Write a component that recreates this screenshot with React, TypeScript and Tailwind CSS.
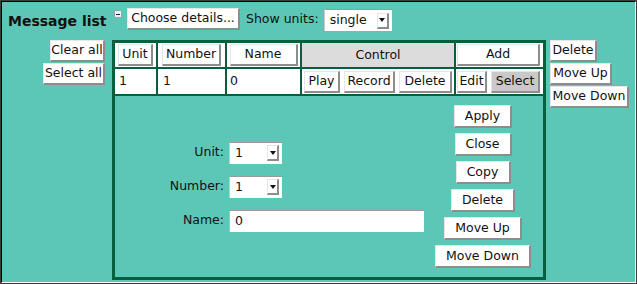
const btn =
  "h-[22px] bg-white border-t border-l border-t-[#e6e6e6] border-l-[#e6e6e6] border-r-2 border-b-2 border-r-[#8d8d8d] border-b-[#8d8d8d] flex items-center justify-center whitespace-nowrap text-[12.5px] leading-none text-[#111]";

const Btn = ({ label, w, extra = "" }: { label: string; w: string; extra?: string }) => (
  <div className={`${btn} ${w} ${extra}`}>{label}</div>
);

const Select = ({ value, w }: { value: string; w: string }) => (
  <div
    className={`${w} h-[22px] bg-white border-t border-l border-t-[#9a9a9a] border-l-[#c8c8c8] flex items-center justify-between pl-[5px] pr-[3px] text-[12.5px]`}
  >
    <span>{value}</span>
    <span className="w-[12px] h-[16px] bg-white border-r-2 border-b-2 border-r-[#8d8d8d] border-b-[#8d8d8d] border-t border-l border-t-[#e6e6e6] border-l-[#e6e6e6] flex items-center justify-center">
      <svg width="6" height="4" viewBox="0 0 6 4">
        <path d="M0 0 L6 0 L3 4 Z" fill="#111" />
      </svg>
    </span>
  </div>
);

const App = () => {
  return (
    <div className="w-[637px] h-[284px] border border-[#3c3c3c] font-['DejaVu_Sans',sans-serif] text-[#111]">
      <div className="h-full border border-t-black border-l-black border-r-white border-b-white bg-[#5dc7b7]">
        {/* title row */}
        <div className="flex items-start pt-[6px] pl-[6px]">
          <div className="text-[14px] font-bold leading-[22px] mt-[2px] w-[100px]">Message list</div>
          <div className="ml-[6px] mt-[2px] w-[8px] h-[8px] bg-[#eef2f6] border border-[#9aa4b0] flex items-center justify-center">
            <div className="w-[4px] h-[1px] bg-[#222]" />
          </div>
          <Btn label="Choose details..." w="w-[113px] ml-[5px]" />
          <div className="ml-[6px] h-[22px] flex items-center text-[12.5px]">Show units:</div>
          <div className="ml-[5px] mt-[1px]">
            <Select value="single" w="w-[68px]" />
          </div>
        </div>

        {/* main row */}
        <div className="flex items-start mt-[8px]">
          <div className="w-[103px] flex flex-col items-end gap-[1px]">
            <Btn label="Clear all" w="w-[55px]" />
            <Btn label="Select all" w="w-[62px]" />
          </div>

          <div className="ml-[7px] w-[434px] border-[3px] border-[#065f3d]">
            <div className="flex h-[26px] border-b-2 border-[#065f3d] bg-white">
              <div className="w-[43px] border-r-2 border-[#065f3d] flex items-center justify-center">
                <Btn label="Unit" w="w-[35px]" />
              </div>
              <div className="w-[69px] border-r-2 border-[#065f3d] flex items-center justify-center">
                <Btn label="Number" w="w-[59px]" />
              </div>
              <div className="w-[75px] border-r-2 border-[#065f3d] flex items-center justify-center">
                <Btn label="Name" w="w-[68px]" />
              </div>
              <div className="w-[154px] border-r-2 border-[#065f3d] bg-[#dcdcdc] flex items-center justify-center text-[12.5px]">
                Control
              </div>
              <div className="w-[87px] flex items-center pl-[1px]">
                <Btn label="Add" w="w-[83px]" />
              </div>
            </div>
            <div className="flex h-[27px] border-b-2 border-[#065f3d] bg-white text-[12.5px]">
              <div className="w-[43px] border-r-2 border-[#065f3d] flex items-center pl-[4px]">1</div>
              <div className="w-[69px] border-r-2 border-[#065f3d] flex items-center pl-[5px]">1</div>
              <div className="w-[75px] border-r-2 border-[#065f3d] flex items-center pl-[3px]">0</div>
              <div className="w-[154px] border-r-2 border-[#065f3d] flex items-center pl-[2px] gap-[4px]">
                <Btn label="Play" w="w-[36px]" />
                <Btn label="Record" w="w-[51px]" />
                <Btn label="Delete" w="w-[53px]" />
              </div>
              <div className="w-[87px] flex items-center pl-[1px] gap-[4px]">
                <Btn label="Edit" w="w-[30px]" />
                <Btn label="Select" w="w-[49px]" extra="!bg-[#c9c9c9]" />
              </div>
            </div>
            <div className="h-[181px] flex items-center">
              <div className="grid grid-cols-[109px_195px] gap-x-[5px] gap-y-[12px] items-center text-[12.5px]">
                <div className="text-right">Unit:</div>
                <Select value="1" w="w-[53px]" />
                <div className="text-right">Number:</div>
                <Select value="1" w="w-[53px]" />
                <div className="text-right">Name:</div>
                <div className="h-[22px] bg-white border-t border-l border-t-[#9a9a9a] border-l-[#b8b8b8] flex items-center pl-[5px]">
                  0
                </div>
              </div>
              <div className="ml-[11px] w-[96px] flex flex-col items-center gap-[5px]">
                <Btn label="Apply" w="w-[58px] !h-[23px]" />
                <Btn label="Close" w="w-[57px] !h-[23px]" />
                <Btn label="Copy" w="w-[55px] !h-[23px]" />
                <Btn label="Delete" w="w-[64px] !h-[23px]" />
                <Btn label="Move Up" w="w-[78px] !h-[23px]" />
                <Btn label="Move Down" w="w-[96px] !h-[23px]" />
              </div>
            </div>
          </div>

          <div className="ml-[4px] flex flex-col items-start gap-[1px]">
            <Btn label="Delete" w="w-[47px]" />
            <Btn label="Move Up" w="w-[62px]" />
            <Btn label="Move Down" w="w-[79px]" />
          </div>
        </div>
      </div>
    </div>
  );
};

export default App;
